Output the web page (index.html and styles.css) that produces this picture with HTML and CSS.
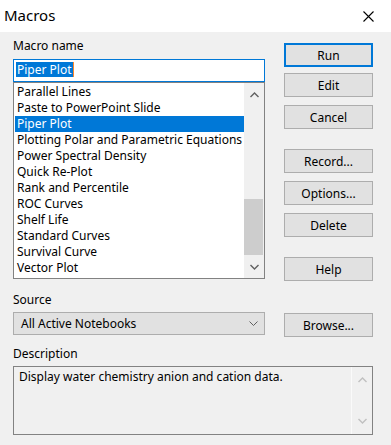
FILE: index.html
```html
<!DOCTYPE html>
<html lang="en">
<head>
  <meta charset="UTF-8" />
  <meta name="viewport" content="width=device-width, initial-scale=1.0"/>
  <title>Macros</title>
  <link rel="stylesheet" href="styles.css">
</head>

<body>
  <!-- Title Bar -->
  <div class="title-bar">
    <span class="title">Macros</span>
    <svg class="close-icon" width="11" height="11" viewBox="0 0 11 11">
      <path d="M0.5 0.5 L10.5 10.5 M10.5 0.5 L0.5 10.5" stroke="#000" stroke-width="1.1" fill="none"/>
    </svg>
  </div>

  <div class="dialog-body">
    <!-- Macro name + list, command buttons -->
    <div class="top-section">
      <div class="left-col">
        <label class="field-label">Macro name</label>
        <div class="name-input"><span class="name-selected">Piper Plot</span><span class="caret"></span></div>

        <div class="list-box">
          <ul class="macro-list">
            <li>Parallel Lines</li>
            <li>Paste to PowerPoint Slide</li>
            <li class="selected">Piper Plot</li>
            <li>Plotting Polar and Parametric Equations</li>
            <li>Power Spectral Density</li>
            <li>Quick Re-Plot</li>
            <li>Rank and Percentile</li>
            <li>ROC Curves</li>
            <li>Shelf Life</li>
            <li>Standard Curves</li>
            <li>Survival Curve</li>
            <li>Vector Plot</li>
          </ul>
          <div class="scrollbar">
            <div class="scroll-arrow">
              <svg width="9" height="6" viewBox="0 0 9 6"><polyline points="0.5,5 4.5,1 8.5,5" stroke="#606060" stroke-width="1.4" fill="none"/></svg>
            </div>
            <div class="scroll-track"><div class="scroll-thumb"></div></div>
            <div class="scroll-arrow">
              <svg width="9" height="6" viewBox="0 0 9 6"><polyline points="0.5,1 4.5,5 8.5,1" stroke="#606060" stroke-width="1.4" fill="none"/></svg>
            </div>
          </div>
        </div>
      </div>

      <div class="button-col">
        <button class="btn btn-default">Run</button>
        <button class="btn">Edit</button>
        <button class="btn">Cancel</button>
        <button class="btn group-start">Record...</button>
        <button class="btn">Options...</button>
        <button class="btn">Delete</button>
        <button class="btn group-start">Help</button>
      </div>
    </div>

    <!-- Source -->
    <label class="field-label source-label">Source</label>
    <div class="source-row">
      <div class="dropdown">
        <span>All Active Notebooks</span>
        <svg width="9" height="5" viewBox="0 0 9 5"><polyline points="0.5,0.5 4.5,4.5 8.5,0.5" stroke="#606060" stroke-width="1" fill="none"/></svg>
      </div>
      <button class="btn browse-btn">Browse...</button>
    </div>

    <!-- Description -->
    <label class="field-label desc-label">Description</label>
    <div class="desc-box">
      <div class="desc-text">Display water chemistry anion and cation data.</div>
      <div class="desc-scroll">
        <svg width="9" height="6" viewBox="0 0 9 6"><polyline points="0.5,5 4.5,1 8.5,5" stroke="#c0c0c0" stroke-width="1.4" fill="none"/></svg>
        <svg width="9" height="6" viewBox="0 0 9 6"><polyline points="0.5,1 4.5,5 8.5,1" stroke="#c0c0c0" stroke-width="1.4" fill="none"/></svg>
      </div>
    </div>
  </div>
</body>
</html>
```

FILE: styles.css
```css
* {
  box-sizing: border-box;
}

body {
  margin: 0;
  width: 391px;
  height: 445px;
  overflow: hidden;
  background-color: #f0f0f0;
  font-family: "Noto Sans", "Open Sans", Arial, sans-serif;
  font-size: 12px;
  color: #000;
}

.title-bar {
  height: 32px;
  background-color: #fff;
  display: flex;
  align-items: center;
  justify-content: space-between;
  padding: 0 17px 0 4px;
}

.title {
  font-size: 15px;
  margin-bottom: 3px;
}

.close-icon {
  margin-top: 1px;
}

.dialog-body {
  padding: 6px 18px 0 13px;
}

.top-section {
  display: flex;
  gap: 19px;
}

.left-col {
  width: 252px;
}

.field-label {
  display: block;
  line-height: 16px;
}

.name-input {
  margin-top: 5px;
  height: 23px;
  border: 1px solid #0078d7;
  background-color: #fff;
  padding: 2px 0 0 2px;
  display: flex;
  align-items: flex-start;
}

.name-selected {
  background-color: #0078d7;
  color: #fff;
  line-height: 15px;
  padding: 0 1px 0 1px;
}

.caret {
  width: 1px;
  height: 15px;
  background-color: #ff8728;
}

.list-box {
  height: 197px;
  border: 1px solid #828282;
  background-color: #fff;
  display: flex;
}

.macro-list {
  flex: 1;
  list-style: none;
  margin: 0;
  padding: 1px 0 0 1px;
}

.macro-list li {
  line-height: 16px;
  height: 16px;
  padding-left: 2px;
  white-space: nowrap;
}

.macro-list li.selected {
  background-color: #0078d7;
  color: #fff;
}

.scrollbar {
  width: 20px;
  background-color: #f0f0f0;
  display: flex;
  flex-direction: column;
}

.scroll-arrow {
  height: 23px;
  display: flex;
  align-items: center;
  justify-content: center;
}

.scroll-track {
  flex: 1;
  display: flex;
  flex-direction: column;
  justify-content: flex-end;
}

.scroll-thumb {
  height: 56px;
  margin-right: 1px;
  background-color: #cdcdcd;
}

.button-col {
  width: 89px;
  padding-top: 5px;
  display: flex;
  flex-direction: column;
  gap: 8px;
}

.btn {
  display: block;
  width: 89px;
  height: 24px;
  padding: 0;
  border: 1px solid #adadad;
  background-color: #e1e1e1;
  font-family: inherit;
  font-size: 12px;
  color: #000;
}

.btn-default {
  border: 2px solid #0078d7;
  margin-bottom: -2px;
}

.group-start {
  margin-top: 12px;
}

.source-label {
  margin-top: 11px;
}

.source-row {
  margin-top: 4px;
  display: flex;
  align-items: flex-start;
  gap: 19px;
}

.dropdown {
  width: 252px;
  height: 23px;
  border: 1px solid #adadad;
  background-color: #e1e1e1;
  display: flex;
  align-items: center;
  justify-content: space-between;
  padding: 0 6px 0 7px;
}

.browse-btn {
  margin-top: 1px;
}

.desc-label {
  margin-top: 9px;
}

.desc-box {
  margin-top: 4px;
  width: 360px;
  height: 69px;
  border: 1px solid #828282;
  display: flex;
}

.desc-text {
  flex: 1;
  padding: 2px 0 0 5px;
  line-height: 16px;
}

.desc-scroll {
  width: 21px;
  border-left: 1px solid #fafafa;
  display: flex;
  flex-direction: column;
  align-items: center;
  justify-content: space-between;
  padding: 10px 0 10px 0;
}
```
